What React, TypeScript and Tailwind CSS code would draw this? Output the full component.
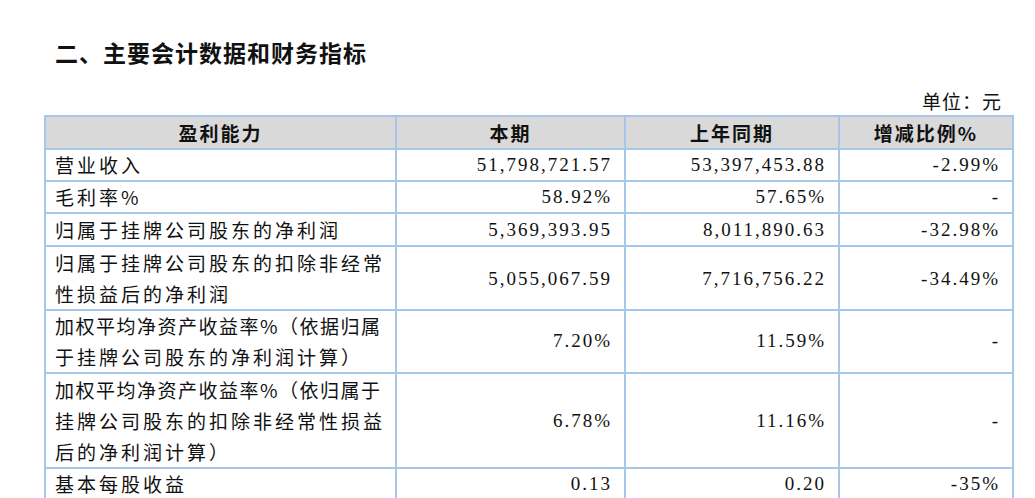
import type { FC } from 'react'

interface Row {
  label: string[]
  current: string
  previous: string
  change: string
  lh: string
}

const rows: Row[] = [
  { label: ['营业收入'], current: '51,798,721.57', previous: '53,397,453.88', change: '-2.99%', lh: 'leading-[30px]' },
  { label: ['毛利率%'], current: '58.92%', previous: '57.65%', change: '-', lh: 'leading-[30px]' },
  { label: ['归属于挂牌公司股东的净利润'], current: '5,369,393.95', previous: '8,011,890.63', change: '-32.98%', lh: 'leading-[31px]' },
  { label: ['归属于挂牌公司股东的扣除非经常', '性损益后的净利润'], current: '5,055,067.59', previous: '7,716,756.22', change: '-34.49%', lh: 'leading-[31px]' },
  { label: ['加权平均净资产收益率%（依据归属', '于挂牌公司股东的净利润计算）'], current: '7.20%', previous: '11.59%', change: '-', lh: 'leading-[30.5px]' },
  { label: ['加权平均净资产收益率%（依归属于', '挂牌公司股东的扣除非经常性损益', '后的净利润计算）'], current: '6.78%', previous: '11.16%', change: '-', lh: 'leading-[31px]' },
  { label: ['基本每股收益'], current: '0.13', previous: '0.20', change: '-35%', lh: 'leading-[30px]' },
]

const cjk = "font-['Noto_Sans_CJK_SC',sans-serif]"
const num = "font-['Liberation_Serif','Noto_Sans_CJK_SC',serif] text-right tracking-[2px] pr-[12px]"

export const App: FC = () => {
  return (
    <div className={`w-[1035px] h-[498px] overflow-hidden bg-white pl-[44px] text-[#111] ${cjk}`}>
      <h2 className="pt-[36px] pl-[11px] text-[23px] font-bold leading-[32px] tracking-[1px]">
        二、主要会计数据和财务指标
      </h2>
      <div className="w-[968px] mt-[19px] pr-[10px] text-right text-[19px] leading-[28px] tracking-[1px]">
        单位：元
      </div>

      <table className="w-[968px] table-fixed border-collapse border-2 border-[#a7c7e8] text-[19px]">
        <colgroup>
          <col className="w-[351px]" />
          <col className="w-[229px]" />
          <col className="w-[214px]" />
          <col className="w-[174px]" />
        </colgroup>
        <thead>
          <tr className="bg-[#d9d9d9] font-bold leading-[31px] tracking-[2px]">
            <th className="border-2 border-[#a7c7e8] text-center font-bold">盈利能力</th>
            <th className="border-2 border-[#a7c7e8] text-center font-bold">本期</th>
            <th className="border-2 border-[#a7c7e8] text-center font-bold">上年同期</th>
            <th className="border-2 border-[#a7c7e8] text-center font-bold">增减比例%</th>
          </tr>
        </thead>
        <tbody>
          {rows.map(r => (
            <tr key={r.label.join('')} className={r.lh}>
              <td className="border-2 border-[#a7c7e8] pl-[9px] tracking-[3px] whitespace-nowrap">
                {r.label.map(l => (
                  // lines with "%（" run wider in this font, so tighten them
                  <div key={l} className={l.includes('%（') ? 'tracking-[1.5px]' : ''}>{l}</div>
                ))}
              </td>
              <td className={`border-2 border-[#a7c7e8] ${num}`}>{r.current}</td>
              <td className={`border-2 border-[#a7c7e8] ${num}`}>{r.previous}</td>
              <td className={`border-2 border-[#a7c7e8] ${num}`}>{r.change}</td>
            </tr>
          ))}
        </tbody>
      </table>
    </div>
  )
}

export default App
